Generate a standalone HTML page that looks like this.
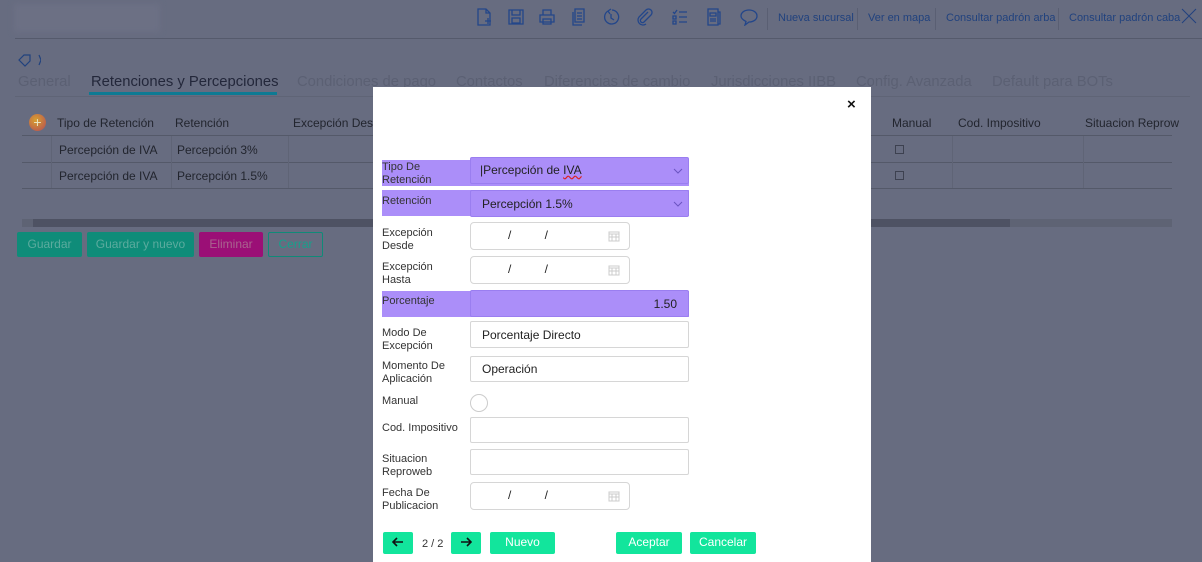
<!DOCTYPE html>
<html><head><meta charset="utf-8"><style>
*{box-sizing:border-box;margin:0;padding:0}
body{width:1202px;height:562px;overflow:hidden;background:#676c80;font-family:"Liberation Sans",sans-serif;position:relative;color:#2b2f3a}
.a{position:absolute;white-space:nowrap}
.hl{color:#21427e;font-size:11px}
.tab{position:absolute;top:74px;font-size:14.8px;color:#5b6073}
.th{position:absolute;top:116px;font-size:12px;color:#22252e}
.td{position:absolute;font-size:12px;color:#22252e}
.ic{position:absolute;top:8px;width:18px;height:18px;stroke:#23468a;fill:none;stroke-width:1.3}
.modal{position:absolute;left:373px;top:87px;width:498px;height:475px;background:#fff}
.lab{position:absolute;left:9px;font-size:11px;line-height:12.5px;color:#333}
.pl{position:absolute;left:9px;width:307px;background:#ab8ef9}
.inp{position:absolute;left:97px;width:219px;border:1px solid #d6d6d6;border-radius:2px;font-size:12px;padding-left:11px;color:#222;background:#fff}
.sel{background:#ab8ef9;border-color:#9a7ef0}
.dt{width:160px;border-radius:4px}
.btn{position:absolute;top:445px;height:22px;background:#12e59c;border-radius:2px;color:#fff;font-size:12px;text-align:center;line-height:20px}
</style></head><body>
<div class="a" style="left:14px;top:4px;width:146px;height:28px;background:#6c7084;filter:blur(3px)"></div>
<div class="a" style="left:15px;top:38px;width:1187px;height:1px;background:#555a6c"></div>
<svg class="ic" style="left:475px" viewBox="0 0 18 18"><path d="M3 1h8l4 4v12H3z M11 1v4h4 M10 13h6 M13 10v6"/></svg>
<svg class="ic" style="left:507px" viewBox="0 0 18 18"><path d="M2 2h14v14H2z M5 2v5h8V2 M5 10h8v5H5z"/></svg>
<svg class="ic" style="left:538px" viewBox="0 0 18 18"><path d="M5 2h8v5H5z M2 7h14v7H2z M5 11h8v5H5z"/></svg>
<svg class="ic" style="left:570px" viewBox="0 0 18 18"><path d="M5 1h9v13H5z M3 4v13h9 M7 5h5 M7 8h5 M7 11h5"/></svg>
<svg class="ic" style="left:602px" viewBox="0 0 18 18"><path d="M6 3a7 7 0 1 0 4-1 M6 3l3-2 M6 3l2 3 M9 6v4l3 2"/></svg>
<svg class="ic" style="left:636px" viewBox="0 0 18 18"><path d="M12 4L5 11a2 2 0 0 0 3 3l7-7a3.5 3.5 0 0 0-5-5L3 9a5 5 0 0 0 7 7"/></svg>
<svg class="ic" style="left:671px" viewBox="0 0 18 18"><path d="M2 4l1.5 1.5L6 2 M2 8h3v3H2z M2 13h3v3H2z M8 4h8 M8 9h8 M8 14h8"/></svg>
<svg class="ic" style="left:705px" viewBox="0 0 18 18"><path d="M3 1h10v16H3z M13 4h2v12h-2 M5 5h6v3H5z M5 11h6 M5 13h6"/></svg>
<svg class="ic" style="left:740px" viewBox="0 0 18 18"><path d="M9 2c4.5 0 8 2.5 8 6s-3.5 6-8 6l-4 3 1-3.5C3 12 1 10 1 8c0-3.5 3.5-6 8-6z"/></svg>
<div class="a" style="left:767px;top:8px;width:1px;height:22px;background:#5a5f73"></div>
<div class="a hl" style="left:778px;top:12px">Nueva sucursal</div>
<div class="a" style="left:857px;top:8px;width:1px;height:22px;background:#5a5f73"></div>
<div class="a hl" style="left:868px;top:12px">Ver en mapa</div>
<div class="a" style="left:935px;top:8px;width:1px;height:22px;background:#5a5f73"></div>
<div class="a hl" style="left:946px;top:12px">Consultar padrón arba</div>
<div class="a" style="left:1058px;top:8px;width:1px;height:22px;background:#5a5f73"></div>
<div class="a hl" style="left:1069px;top:12px">Consultar padrón caba</div>
<svg class="a" style="left:1181px;top:8px" width="16" height="16" viewBox="0 0 16 16"><path d="M1 1l14 14M15 1L1 15" stroke="#21427e" stroke-width="1"/></svg>
<svg class="a" style="left:17px;top:53px" width="24" height="14" viewBox="0 0 24 14"><path d="M2 7l5-5h6v6l-5 5z M22 2l2 5-2 5" stroke="#21427e" fill="none" stroke-width="1.2"/></svg>
<div class="tab" style="left:18px">General</div>
<div class="tab" style="left:91px;color:#23273a">Retenciones y Percepciones</div>
<div class="a" style="left:89px;top:92px;width:188px;height:3px;background:#0e7a93"></div>
<div class="tab" style="left:297px">Condiciones de pago</div>
<div class="tab" style="left:456px">Contactos</div>
<div class="tab" style="left:544px">Diferencias de cambio</div>
<div class="tab" style="left:711px">Jurisdicciones IIBB</div>
<div class="tab" style="left:856px">Config. Avanzada</div>
<div class="tab" style="left:992px">Default para BOTs</div>
<div class="a" style="left:15px;top:96px;width:1175px;height:1px;background:#5f6476"></div>
<div class="a" style="left:29px;top:114px;width:17px;height:17px;border-radius:50%;background:radial-gradient(circle at 40% 35%,#d8a030,#b24a56);color:#e9e3c0;font-size:14px;line-height:16px;text-align:center">+</div>
<div class="th" style="left:57px">Tipo de Retención</div>
<div class="th" style="left:175px">Retención</div>
<div class="th" style="left:293px">Excepción Desc</div>
<div class="th" style="left:892px">Manual</div>
<div class="th" style="left:958px">Cod. Impositivo</div>
<div class="th" style="left:1085px">Situacion Reprow</div>
<div class="a" style="left:22px;top:135px;width:1150px;height:1px;background:#545969"></div>
<div class="a" style="left:22px;top:162px;width:1150px;height:1px;background:#545969"></div>
<div class="a" style="left:22px;top:188px;width:1150px;height:1px;background:#545969"></div>
<div class="a" style="left:51px;top:136px;width:1px;height:52px;background:#5f6476"></div>
<div class="a" style="left:171px;top:136px;width:1px;height:52px;background:#5f6476"></div>
<div class="a" style="left:288px;top:136px;width:1px;height:52px;background:#5f6476"></div>
<div class="a" style="left:952px;top:136px;width:1px;height:52px;background:#5f6476"></div>
<div class="a" style="left:1083px;top:136px;width:1px;height:52px;background:#5f6476"></div>
<div class="td" style="left:59px;top:143px">Percepción de IVA</div><div class="td" style="left:177px;top:143px">Percepción 3%</div>
<div class="td" style="left:59px;top:169px">Percepción de IVA</div><div class="td" style="left:177px;top:169px">Percepción 1.5%</div>
<div class="a" style="left:895px;top:145px;width:9px;height:9px;border:1px solid #3d4150"></div>
<div class="a" style="left:895px;top:171px;width:9px;height:9px;border:1px solid #3d4150"></div>
<div class="a" style="left:22px;top:219px;width:1150px;height:8px;background:#5e6374"></div>
<div class="a" style="left:33px;top:219px;width:977px;height:8px;background:#4e5263"></div>
<div class="a" style="left:17px;top:232px;width:65px;height:25px;background:#0f8c79;border-radius:2px;color:#5cab9e;font-size:12px;text-align:center;line-height:24px">Guardar</div>
<div class="a" style="left:87px;top:232px;width:107px;height:25px;background:#0f8c79;border-radius:2px;color:#5cab9e;font-size:12px;text-align:center;line-height:24px">Guardar y nuevo</div>
<div class="a" style="left:199px;top:232px;width:64px;height:25px;background:#9b0f76;border-radius:2px;color:#a9648f;font-size:12px;text-align:center;line-height:24px">Eliminar</div>
<div class="a" style="left:268px;top:232px;width:55px;height:25px;border:1px solid #108a78;border-radius:2px;color:#17a08b;font-size:12px;text-align:center;line-height:23px">Cerrar</div>

<div class="modal">
<div class="a" style="left:474px;top:9px;font-size:15px;font-weight:bold;color:#111">×</div>
<div class="pl" style="top:73px;height:26px"></div>
<div class="lab" style="top:74px">Tipo De<br>Retención</div>
<div class="inp sel" style="top:70px;height:27px;line-height:25px;padding-left:9px">|Percepción de <span style="text-decoration:underline wavy #d22">IVA</span></div>
<div class="pl" style="top:103px;height:26px"></div>
<div class="lab" style="top:108px">Retención</div>
<div class="inp sel" style="top:103px;height:27px;line-height:27px">Percepción 1.5%</div>
<svg class="a" style="left:300px;top:81px" width="10" height="50" viewBox="0 0 10 50"><path d="M1 1l4 4 4-4M1 34l4 4 4-4" stroke="#6b54c2" fill="none"/></svg>
<div class="lab" style="top:140px">Excepción<br>Desde</div>
<div class="inp dt" style="top:135px;height:28px"></div>
<div class="lab" style="top:174px">Excepción<br>Hasta</div>
<div class="inp dt" style="top:169px;height:28px"></div>
<div class="pl" style="top:204px;height:26px"></div>
<div class="lab" style="top:208px">Porcentaje</div>
<div class="inp sel" style="top:203px;height:27px;line-height:27px;text-align:right;padding-right:11px">1.50</div>
<div class="lab" style="top:240px">Modo De<br>Excepción</div>
<div class="inp" style="top:234px;height:27px;line-height:26px">Porcentaje Directo</div>
<div class="lab" style="top:273px">Momento De<br>Aplicación</div>
<div class="inp" style="top:269px;height:26px;line-height:25px">Operación</div>
<div class="lab" style="top:308px">Manual</div>
<div class="a" style="left:97px;top:307px;width:18px;height:18px;border:1px solid #ccc;border-radius:50%"></div>
<div class="lab" style="top:335px">Cod. Impositivo</div>
<div class="inp" style="top:330px;height:26px"></div>
<div class="lab" style="top:366px">Situacion<br>Reproweb</div>
<div class="inp" style="top:362px;height:26px"></div>
<div class="lab" style="top:400px">Fecha De<br>Publicacion</div>
<div class="inp dt" style="top:395px;height:28px"></div>
<div class="a" style="left:135px;top:141px;font-size:12px;color:#222">/ &nbsp; &nbsp; &nbsp; &nbsp; &nbsp;/</div>
<div class="a" style="left:135px;top:175px;font-size:12px;color:#222">/ &nbsp; &nbsp; &nbsp; &nbsp; &nbsp;/</div>
<div class="a" style="left:135px;top:401px;font-size:12px;color:#222">/ &nbsp; &nbsp; &nbsp; &nbsp; &nbsp;/</div>
<svg class="a" style="left:235px;top:143px" width="12" height="12" viewBox="0 0 12 12"><path d="M1 2h10v9H1z M1 4h10 M4 4v7 M8 4v7 M1 7h10" stroke="#ccc" fill="none"/></svg>
<svg class="a" style="left:235px;top:177px" width="12" height="12" viewBox="0 0 12 12"><path d="M1 2h10v9H1z M1 4h10 M4 4v7 M8 4v7 M1 7h10" stroke="#ccc" fill="none"/></svg>
<svg class="a" style="left:235px;top:403px" width="12" height="12" viewBox="0 0 12 12"><path d="M1 2h10v9H1z M1 4h10 M4 4v7 M8 4v7 M1 7h10" stroke="#ccc" fill="none"/></svg>
<div class="btn" style="left:10px;width:30px"><svg width="12" height="10" viewBox="0 0 12 10" style="margin-top:5px"><path d="M11 5H1M5 1L1 5l4 4" stroke="#111" stroke-width="1.6" fill="none"/></svg></div>
<div class="a" style="left:49px;top:451px;font-size:11px;color:#333">2 / 2</div>
<div class="btn" style="left:78px;width:30px"><svg width="12" height="10" viewBox="0 0 12 10" style="margin-top:5px"><path d="M1 5h10M7 1l4 4-4 4" stroke="#111" stroke-width="1.6" fill="none"/></svg></div>
<div class="btn" style="left:117px;width:65px">Nuevo</div>
<div class="btn" style="left:243px;width:66px">Aceptar</div>
<div class="btn" style="left:317px;width:66px">Cancelar</div>
</div>
</body></html>
